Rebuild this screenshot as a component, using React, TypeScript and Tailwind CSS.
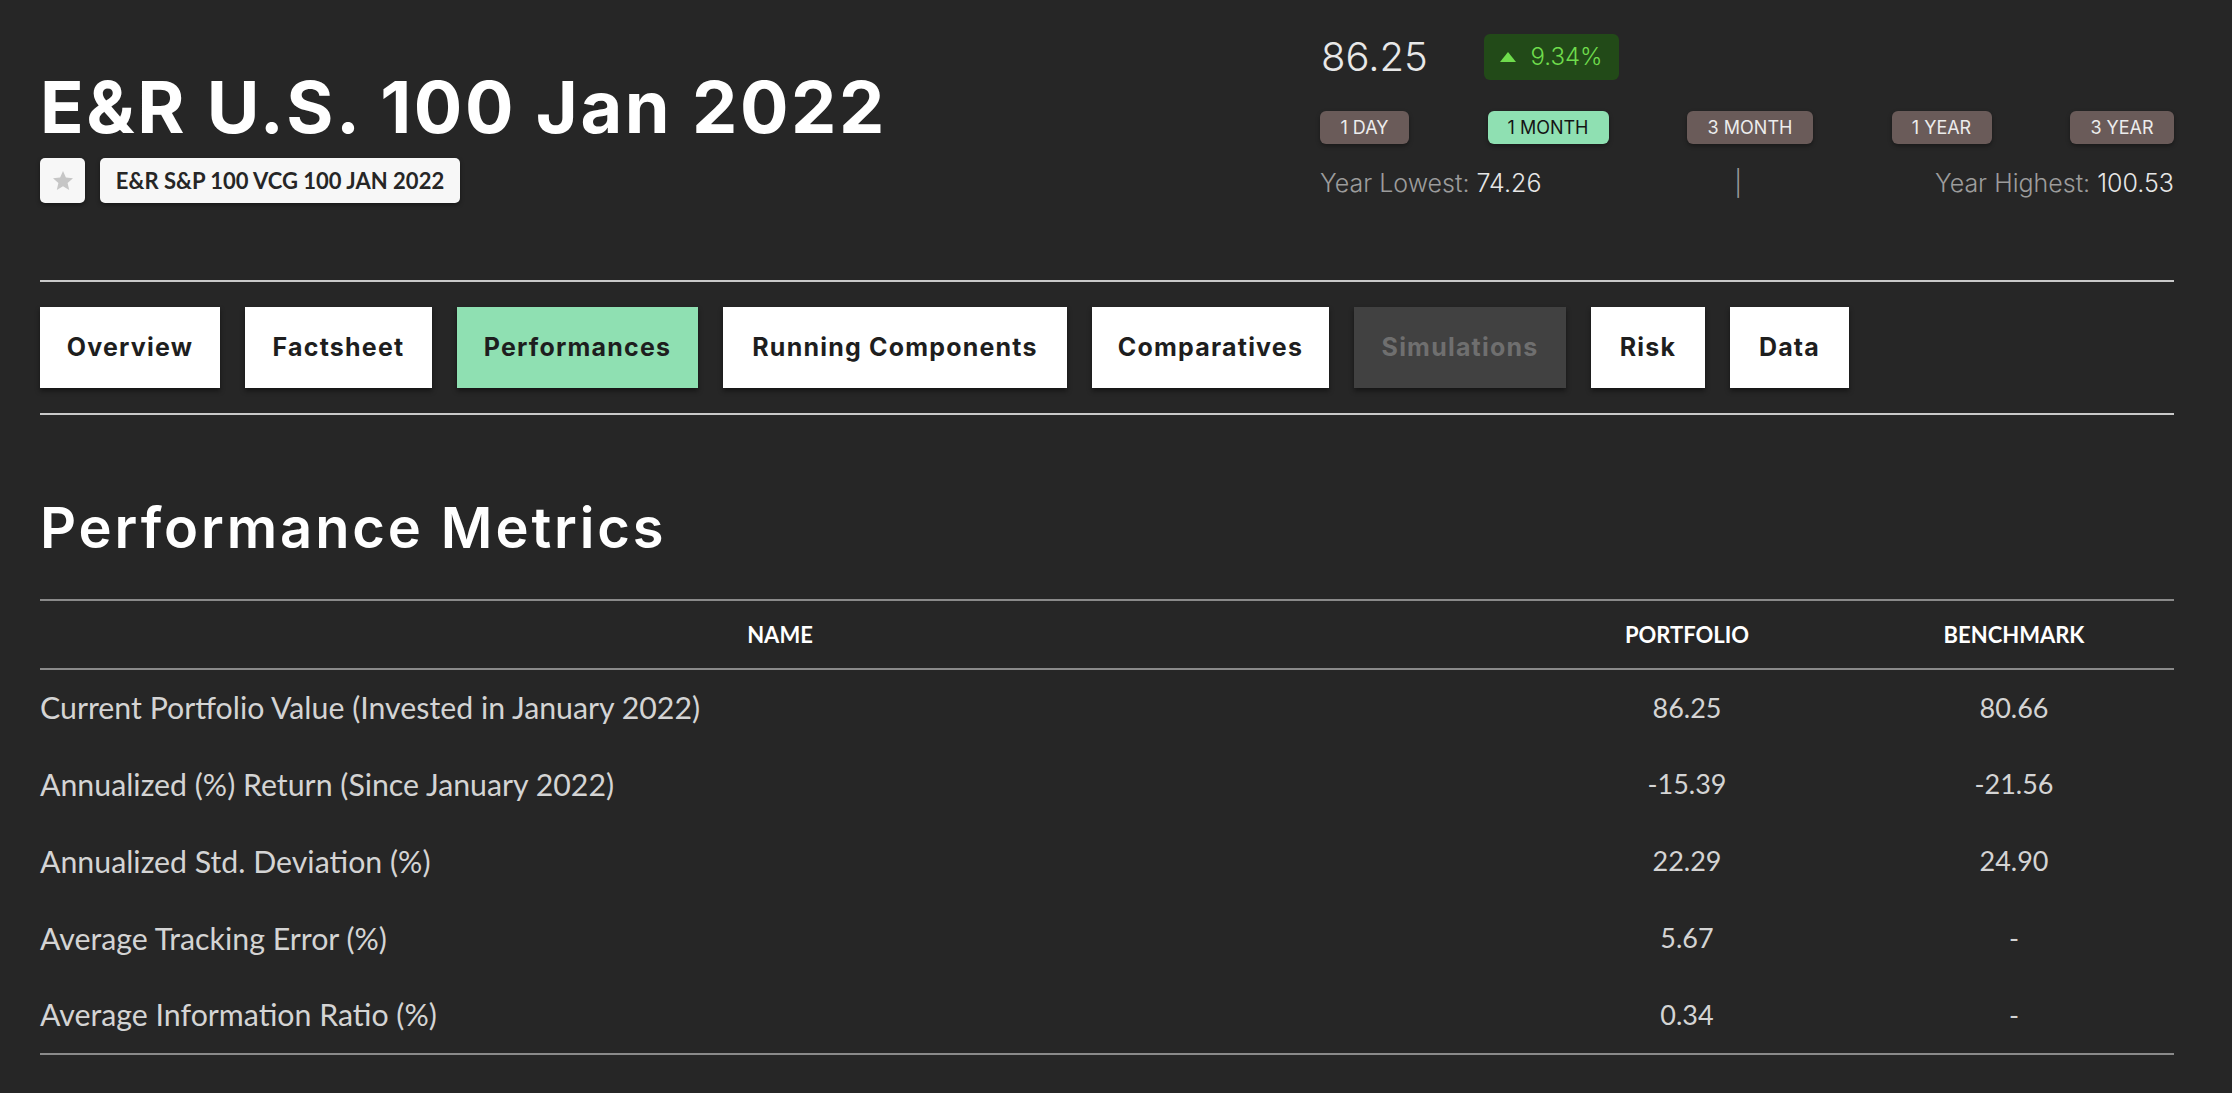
import React from "react";

const titleFont = { fontFamily: "Inter, 'Liberation Sans', sans-serif" };

const tabs = [
  { label: "Overview", w: "w-[180px]", kind: "normal" },
  { label: "Factsheet", w: "w-[187px]", kind: "normal" },
  { label: "Performances", w: "w-[241px]", kind: "active" },
  { label: "Running Components", w: "w-[344px]", kind: "normal" },
  { label: "Comparatives", w: "w-[237px]", kind: "normal" },
  { label: "Simulations", w: "w-[212px]", kind: "disabled" },
  { label: "Risk", w: "w-[114px]", kind: "normal" },
  { label: "Data", w: "w-[119px]", kind: "normal" },
];

const periods = [
  { label: "1 DAY", w: "w-[89px]", active: false },
  { label: "1 MONTH", w: "w-[121px]", active: true },
  { label: "3 MONTH", w: "w-[126px]", active: false },
  { label: "1 YEAR", w: "w-[100px]", active: false },
  { label: "3 YEAR", w: "w-[104px]", active: false },
];

const rows = [
  ["Current Portfolio Value (Invested in January 2022)", "86.25", "80.66"],
  ["Annualized (%) Return (Since January 2022)", "-15.39", "-21.56"],
  ["Annualized Std. Deviation (%)", "22.29", "24.90"],
  ["Average Tracking Error (%)", "5.67", "-"],
  ["Average Information Ratio (%)", "0.34", "-"],
];

export default function App() {
  return (
    <div
      className="min-h-[1093px] w-full bg-[#262626] pl-[40px] pr-[58px] pt-[34px]"
      style={{ fontFamily: "Lato, 'Liberation Sans', sans-serif" }}
    >
      {/* Header */}
      <header className="flex items-start justify-between">
        <div className="mt-[37px] flex flex-col">
          <h1
            className="h-[72px] text-[72px] font-bold leading-[72px] tracking-[2.6px] text-white whitespace-nowrap"
            style={titleFont}
          >
            E&amp;R U.S. 100 Jan 2022
          </h1>
          <div className="mt-[15px] flex items-center gap-[15px]">
            <div className="flex h-[45px] w-[45px] items-center justify-center rounded-[5px] bg-[#f7f7f7] shadow-[0_2px_4px_rgba(0,0,0,0.4)]">
              <svg width="24" height="24" viewBox="0 0 24 24">
                <polygon
                  points="12,2 14.9,8.6 22,9.3 16.6,14 18.2,21 12,17.3 5.8,21 7.4,14 2,9.3 9.1,8.6"
                  fill="#c6c6c6"
                />
              </svg>
            </div>
            <div className="flex h-[45px] w-[360px] items-center justify-center rounded-[5px] bg-[#f7f7f7] text-[22px] font-bold text-[#262626] shadow-[0_2px_4px_rgba(0,0,0,0.4)]">
              E&amp;R S&amp;P 100 VCG 100 JAN 2022
            </div>
          </div>
        </div>

        <div className="flex w-[854px] flex-col" style={titleFont}>
          <div className="flex h-[46px] items-center">
            <div className="w-[164px] pl-[1px] text-[40px] font-light leading-none text-[#e8e8e8]">
              86.25
            </div>
            <div className="flex h-[46px] w-[135px] items-center justify-center gap-[14px] rounded-[6px] bg-[#224a18]">
              <svg width="16" height="10" viewBox="0 0 16 10">
                <polygon points="8,0 16,10 0,10" fill="#6fdc4c" />
              </svg>
              <span className="text-[24px] font-light text-[#6fdc4c]">9.34%</span>
            </div>
          </div>

          <div className="mt-[31px] flex items-center justify-between">
            {periods.map((p) => (
              <div
                key={p.label}
                className={`flex h-[33px] items-center justify-center rounded-[6px] text-[18px] shadow-[0_2px_4px_rgba(0,0,0,0.35)] ${p.w} ${
                  p.active ? "bg-[#8fe0b2] text-[#151515]" : "bg-[#6a5b59] text-[#ececec]"
                }`}
              >
                {p.label}
              </div>
            ))}
          </div>

          <div className="mt-[23px] flex items-center justify-between text-[25px] font-light leading-[32px]">
            <div className="text-[#9c9c9c]">
              Year Lowest: <span className="text-[#e6e6e6]">74.26</span>
            </div>
            <div className="text-[#9c9c9c]">|</div>
            <div className="text-[#9c9c9c]">
              Year Highest: <span className="text-[#e6e6e6]">100.53</span>
            </div>
          </div>
        </div>
      </header>

      {/* Tabs */}
      <nav className="mt-[77px] flex gap-[25px] border-y-2 border-[#c9c9c9] py-[25px]" style={titleFont}>
        {tabs.map((t) => (
          <div
            key={t.label}
            className={`flex h-[81px] items-center justify-center text-[25px] font-bold tracking-[1.2px] shadow-[0_3px_5px_rgba(0,0,0,0.45)] ${t.w} ${
              t.kind === "active"
                ? "bg-[#8fe0b2] text-[#1e1e1e]"
                : t.kind === "disabled"
                ? "bg-[#414141] text-[#6f6f6f]"
                : "bg-white text-[#1e1e1e]"
            }`}
          >
            {t.label}
          </div>
        ))}
      </nav>

      {/* Performance Metrics */}
      <h2
        className="mt-[85px] h-[56px] text-[56px] font-semibold leading-[56px] tracking-[2.9px] text-white"
        style={titleFont}
      >
        Performance Metrics
      </h2>

      <table className="mt-[43px] w-full border-collapse">
        <thead>
          <tr className="h-[69px] border-y-2 border-[#8a8a8a]">
            <th className="text-center text-[22px] font-bold text-white">NAME</th>
            <th className="w-[334px] text-center text-[22px] font-bold text-white">PORTFOLIO</th>
            <th className="w-[320px] text-center text-[22px] font-bold text-white">BENCHMARK</th>
          </tr>
        </thead>
        <tbody className="border-b-2 border-[#8a8a8a]">
          {rows.map((r) => (
            <tr key={r[0]} className="h-[77px] text-[#d4d4d4]">
              <td className="text-left text-[30.3px]">{r[0]}</td>
              <td className="text-center text-[27px]">{r[1]}</td>
              <td className="text-center text-[27px]">{r[2]}</td>
            </tr>
          ))}
        </tbody>
      </table>
    </div>
  );
}
